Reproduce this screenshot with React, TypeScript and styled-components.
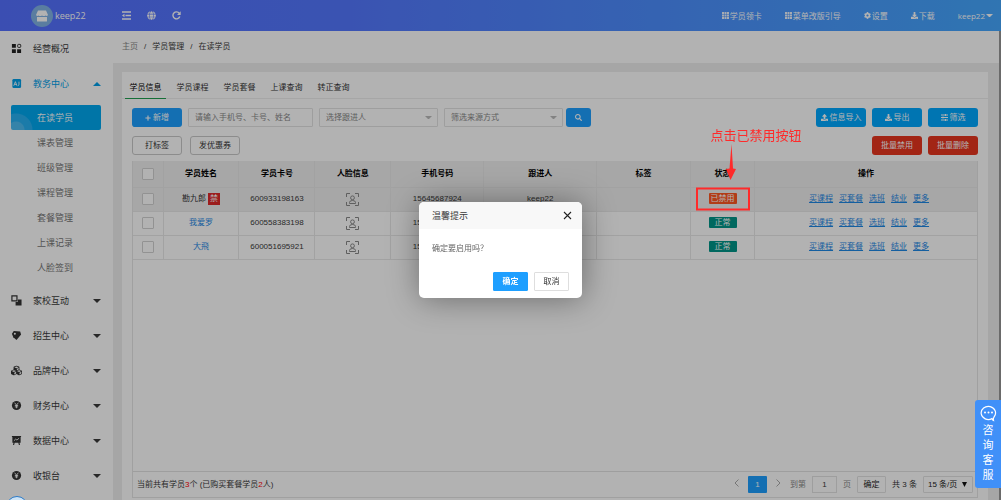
import React from "react";
import styled, { createGlobalStyle, css } from "styled-components";
import {
  FaCog,
  FaDownload,
  FaUpload,
  FaGlobe,
  FaSearch,
  FaPlus,
  FaCubes,
} from "react-icons/fa";

const Global = createGlobalStyle`
  * { box-sizing: border-box; }
  html, body { margin: 0; height: 100%; }
  #root { height: 100%; }
  body {
    font-family: "Liberation Sans", "Noto Sans CJK SC", sans-serif;
    font-size: 8px;
    line-height: 12px;
    color: #3a3a3a;
    background: #eee;
    overflow: hidden;
  }
  button, input, select { font: inherit; color: inherit; margin: 0; padding: 0; }
  button { cursor: pointer; }
  a { color: inherit; text-decoration: none; }
`;

const Page = styled.div`
  height: 100vh;
  display: flex;
  flex-direction: column;
`;

const Header = styled.header`
  flex: none;
  height: 31px;
  display: flex;
  align-items: center;
  justify-content: space-between;
  padding: 0 8px 0 31px;
  color: #fff;
  font-family: "Open Sans", "Noto Sans CJK SC", sans-serif;
  background: linear-gradient(90deg, #5570ff 0%, #5478ff 35%, #45a8ff 100%);
`;

const HeaderGroup = styled.div<{ $gap: number }>`
  display: flex;
  align-items: center;
  gap: ${(p) => p.$gap}px;
`;

const Brand = styled.a`
  display: flex;
  align-items: center;
  gap: 2px;
  width: 91px;
  font-size: 9px;
`;

const Avatar = styled.span`
  width: 22px;
  height: 22px;
  border-radius: 50%;
  background: #82b4e6;
  display: grid;
  place-items: center;
`;

const HeaderButton = styled.button`
  border: 0;
  background: none;
  display: flex;
  align-items: center;
  gap: 1px;
  white-space: nowrap;
`;

const Main = styled.div`
  flex: 1;
  min-height: 0;
  display: flex;
`;

const Sidebar = styled.nav`
  flex: none;
  width: 113px;
  background: #fff;
  overflow: hidden;
  font-size: 9px;
`;

const MenuItem = styled.a<{ $active?: boolean }>`
  height: 35px;
  padding: 0 12px 0 11px;
  display: flex;
  align-items: center;
  color: ${(p) => (p.$active ? "#00a0e9" : "#3a3a3a")};
  & > svg:first-child { width: 11px; height: 11px; margin-right: 11px; }
`;

const MenuText = styled.span`
  flex: 1;
`;

const SubMenu = styled.div`
  padding: 4px 12px 3px 11px;
`;

const SubItem = styled.a<{ $active?: boolean }>`
  position: relative;
  display: flex;
  align-items: center;
  height: 25px;
  padding-left: 26px;
  border-radius: 2px;
  overflow: hidden;
  color: #777;
  ${(p) =>
    p.$active &&
    css`
      color: #fff;
      background:
        radial-gradient(circle at 5px 25px, #4cbcf2 0 8px, #28b0f2 9px 16px, transparent 17px),
        #00a8f0;
    `}
`;

const Content = styled.main`
  flex: 1;
  min-width: 0;
  display: flex;
  flex-direction: column;
  background: #eee;
  border-right: 2px solid #999;
`;

const Breadcrumb = styled.div`
  flex: none;
  height: 32px;
  padding: 0 9px;
  display: flex;
  align-items: center;
  gap: 6px;
  background: #fff;
  a:first-child { color: #888; }
`;

const Card = styled.section`
  flex: 1;
  margin: 9px 11px 0 9px;
  background: #fff;
  display: flex;
  flex-direction: column;
`;

const Tabs = styled.div`
  height: 27px;
  padding-left: 3px;
  display: flex;
  border-bottom: 1px solid #eee;
`;

const Tab = styled.button<{ $active?: boolean }>`
  height: 27px;
  padding: 4px 4px 0;
  width: 41px;
  margin-right: 6px;
  border: 0;
  background: none;
  white-space: nowrap;
  color: ${(p) => (p.$active ? "#000" : "#333")};
  box-shadow: ${(p) => (p.$active ? "inset 0 -1px #20a050" : "none")};
`;

const Body = styled.div`
  flex: 1;
  min-height: 0;
  padding: 9px 10px 2px;
  display: flex;
  flex-direction: column;
`;

const Tools = styled.div`
  display: flex;
  justify-content: space-between;
  margin-bottom: 9px;
  &:nth-child(2) { margin-bottom: 6px; }
`;

const ToolGroup = styled.div<{ $gap: number }>`
  display: flex;
  gap: ${(p) => p.$gap}px;
`;

const tones = {
  blue: "#1e9fff",
  sky: "#00a8ff",
  red: "#e8361f",
  plain: "#fff",
};

const Button = styled.button<{ $tone: keyof typeof tones; $width?: number }>`
  width: ${(p) => p.$width ?? 50}px;
  height: 19px;
  display: flex;
  align-items: center;
  justify-content: center;
  gap: 2px;
  white-space: nowrap;
  border-radius: 3px;
  border: ${(p) => (p.$tone === "plain" ? "1px solid #c9c9c9" : "0")};
  color: ${(p) => (p.$tone === "plain" ? "#333" : "#fff")};
  background: ${(p) => tones[p.$tone]};
`;

const Field = styled.input`
  width: 125px;
  height: 19px;
  padding: 0 6px;
  border: 1px solid #e2e2e2;
  border-radius: 1px;
  background: #fff;
  &::placeholder { color: #888; opacity: 1; }
`;

const SelectBox = styled.span`
  position: relative;
  display: inline-flex;
  align-items: center;
  & > svg { position: absolute; right: 6px; pointer-events: none; }
`;

const Select = styled.select<{ $width: number }>`
  appearance: none;
  width: ${(p) => p.$width}px;
  height: 19px;
  padding: 0 6px;
  border: 1px solid #e2e2e2;
  border-radius: 1px;
  background: #fff;
  color: #888;
`;

const TableFrame = styled.div`
  flex: 1;
  display: flex;
  flex-direction: column;
  border: 1px solid #e6e6e6;
  border-top: 0;
`;

const Table = styled.table`
  width: 100%;
  border-collapse: collapse;
  table-layout: fixed;
  text-align: center;
  th, td {
    padding: 0;
    height: 24px;
    border-right: 1px solid #e8e8e8;
    border-bottom: 1px solid #e8e8e8;
    white-space: nowrap;
  }
  th { height: 26px; background: #f0f0f0; color: #000; }
  th:last-child, td:last-child { border-right: 0; }
`;

const Row = styled.tr<{ $hover?: boolean }>`
  background: ${(p) => (p.$hover ? "#f0f0f0" : "#fff")};
`;

const Check = styled.input`
  appearance: none;
  display: block;
  width: 12px;
  height: 12px;
  margin: 0 auto;
  border: 1px solid #d2d2d2;
  border-radius: 1px;
  background: #fff;
`;

const NameLink = styled.a<{ $plain?: boolean }>`
  color: ${(p) => (p.$plain ? "#333" : "#1e88e5")};
`;

const Ban = styled.span`
  display: inline-block;
  width: 12px;
  margin-left: 2px;
  background: #e02a2a;
  color: #fff;
`;

const Status = styled.span<{ $off?: boolean }>`
  display: inline-block;
  width: 28px;
  height: 11px;
  line-height: 11px;
  border-radius: 1px;
  color: #fff;
  background: ${(p) => (p.$off ? "#ff5722" : "#009688")};
  vertical-align: middle;
`;

const StatusAnchor = styled.span`
  position: relative;
  display: inline-block;
`;

const Highlight = styled.span`
  position: absolute;
  z-index: 20;
  left: 50%;
  top: 50%;
  width: 54px;
  height: 23px;
  transform: translate(-50%, -50%);
  border: 2px solid #ff2a2a;
`;

const Hint = styled.span`
  position: absolute;
  z-index: 20;
  left: 2px;
  bottom: 25px;
  width: 92px;
  display: flex;
  flex-direction: column;
  color: #ff2a2a;
  font-size: 13px;
  line-height: 16px;
  text-align: left;
  svg { display: block; margin-left: 15px; }
`;

const Ops = styled.div`
  display: flex;
  justify-content: center;
  gap: 6px;
  padding-left: 6px;
  color: #1e88e5;
  a { text-decoration: underline; }
`;

const TableFoot = styled.div`
  margin-top: auto;
  height: 26px;
  padding: 0 4px;
  display: flex;
  align-items: center;
  justify-content: space-between;
  border-top: 1px solid #e2e2e2;
  b { color: #f00; font-weight: 400; }
`;

const Pager = styled.div`
  display: flex;
  align-items: center;
  gap: 6px;
  white-space: nowrap;
  span { color: #888; }
  span:nth-last-of-type(2) { color: #333; }
`;

const PageButton = styled.button<{ $kind: "arrow" | "current" | "go" }>`
  height: 17px;
  border-radius: 1px;
  border: ${(p) => (p.$kind === "go" ? "1px solid #e2e2e2" : "0")};
  width: ${(p) => ({ arrow: 11, current: 19, go: 29 })[p.$kind]}px;
  color: ${(p) => (p.$kind === "current" ? "#fff" : "#222")};
  background: ${(p) => (p.$kind === "current" ? "#1e9fff" : "#fff")};
`;

const PageField = styled.input`
  width: 25px;
  height: 17px;
  border: 1px solid #e2e2e2;
  background: #fff;
  text-align: center;
`;

const PageSelect = styled(Select)`
  height: 17px;
  padding: 0 4px;
  color: #222;
`;

const Overlay = styled.div`
  position: fixed;
  inset: 0;
  z-index: 10;
  background: rgba(0, 0, 0, 0.3);
`;

const DialogLayer = styled.div`
  position: fixed;
  inset: 0;
  z-index: 30;
  display: flex;
  align-items: center;
  justify-content: center;
  pointer-events: none;
`;

const Dialog = styled.div`
  width: 163px;
  border-radius: 5px;
  overflow: hidden;
  background: #fff;
  box-shadow: 1px 1px 32px rgba(0, 0, 0, 0.4);
  pointer-events: auto;
`;

const DialogHead = styled.div`
  height: 27px;
  padding: 0 10px 0 13px;
  display: flex;
  align-items: center;
  justify-content: space-between;
  background: #f8f8f8;
  font-size: 9px;
`;

const Close = styled.button`
  border: 0;
  background: none;
  display: flex;
`;

const DialogText = styled.p`
  margin: 0;
  padding: 14px 13px 17px;
  color: #666;
`;

const DialogActions = styled.div`
  display: flex;
  justify-content: flex-end;
  gap: 6px;
  padding: 0 13px 7px;
`;

const DialogButton = styled.button<{ $primary?: boolean }>`
  width: 35px;
  height: 19px;
  border-radius: 1px;
  border: 1px solid ${(p) => (p.$primary ? "#1e9fff" : "#dedede")};
  background: ${(p) => (p.$primary ? "#1e9fff" : "#fff")};
  color: ${(p) => (p.$primary ? "#fff" : "#333")};
  font-weight: ${(p) => (p.$primary ? 700 : 400)};
`;

const Chat = styled.button`
  position: fixed;
  right: 0;
  bottom: 12px;
  z-index: 20;
  width: 26px;
  height: 88px;
  padding: 5px 0 0;
  border: 0;
  border-radius: 3px 0 0 3px;
  background: #4090f8;
  color: #fff;
  display: flex;
  flex-direction: column;
  align-items: center;
  font-size: 11px;
  line-height: 15px;
  svg { margin-bottom: 1px; }
`;

const Bubble = styled.span`
  position: fixed;
  z-index: 20;
  left: 6px;
  bottom: -18px;
  width: 22px;
  height: 22px;
  border: 1px solid #2a7ac8;
  border-radius: 50%;
  background: #cfe4f5;
`;

const Caret = ({ up, color = "currentColor", w = 8 }: { up?: boolean; color?: string; w?: number }) => (
  <svg width={w} height={w / 2} viewBox="0 0 8 4" fill={color}>
    <path d={up ? "M0 4L4 0L8 4Z" : "M0 0H8L4 4Z"} />
  </svg>
);

const Yen = () => (
  <svg viewBox="0 0 12 12">
    <circle cx="6" cy="6" r="5" fill="#333" />
    <path d="M4 3L6 5.600L8 3M6 5.500V9M4.200 6H7.800M4.200 7.500H7.800" stroke="#fff" fill="none" strokeWidth=".9" />
  </svg>
);

const icons: Record<string, React.ReactNode> = {
  grid: (
    <svg viewBox="0 0 12 12" fill="#222">
      <path d="M1 1H5.300V5.300H1ZM1 6.700H5.300V11H1ZM6.700 6.700H11V11H6.700Z" />
      <rect x="7.300" y="1.500" width="3.300" height="3.300" rx=".8" fill="none" stroke="#222" />
    </svg>
  ),
  edu: (
    <svg viewBox="0 0 12 12">
      <rect x="1.500" y="1" width="9.500" height="10" rx="1.500" fill="#00a0e9" />
      <path d="M3 8.500L4.800 4L6.500 8.500M3.600 7H6M8.700 4V7.500L7.500 8.500" stroke="#fff" fill="none" strokeWidth=".9" />
    </svg>
  ),
  home: (
    <svg viewBox="0 0 12 12">
      <path d="M1 1H6.500V6.500H1Z" fill="none" stroke="#333" strokeWidth="1.300" />
      <path d="M7.500 5H11.500V11.500H5V7.500H7.500Z" fill="#333" />
    </svg>
  ),
  tag: (
    <svg viewBox="0 0 12 12">
      <path d="M1 4L3 1L10 1.500L11 5L6 11L2.500 8Z" fill="#333" />
      <circle cx="4.200" cy="4" r="1.100" fill="#fff" />
    </svg>
  ),
  brand: <FaCubes color="#333" />,
  yen: <Yen />,
  data: (
    <svg viewBox="0 0 12 12">
      <path d="M1 1H11V2.200H10.500V8.500H9.300L9.800 11H8.600L8 8.500H4L3.400 11H2.200L2.700 8.500H1.500V2.200H1Z" fill="#333" />
      <path d="M3.200 6.300L5 4.500L6.500 5.500L8.800 3.500" stroke="#fff" fill="none" strokeWidth=".9" />
    </svg>
  ),
};

const FaceIcon = styled.svg`
  vertical-align: middle;
`;

const Face = () => (
  <FaceIcon width="13" height="13" viewBox="0 0 13 13" fill="none" stroke="#888">
    <path d="M.5 4V.5H4M9 .5H12.500V4M12.500 9V12.500H9M4 12.500H.5V9" />
    <circle cx="6.500" cy="4.800" r="1.900" />
    <path d="M3.500 10.500V9.500Q3.500 7.500 6.500 7.500Q9.500 7.500 9.500 9.500V10.500Z" />
  </FaceIcon>
);

const SmallGrid = () => (
  <svg width="7" height="7" viewBox="0 0 7 7" fill="#fff" opacity=".9">
    <path d="M0 0H2V2H0ZM2.500 0H4.500V2H2.500ZM5 0H7V2H5ZM0 2.500H2V4.500H0ZM2.500 2.500H4.500V4.500H2.500ZM5 2.500H7V4.500H5ZM0 5H2V7H0ZM2.500 5H4.500V7H2.500ZM5 5H7V7H5Z" />
  </svg>
);

const subItems = ["在读学员", "课表管理", "班级管理", "课程管理", "套餐管理", "上课记录", "人脸签到"];
const menus = [
  ["home", "家校互动"],
  ["tag", "招生中心"],
  ["brand", "品牌中心"],
  ["yen", "财务中心"],
  ["data", "数据中心"],
  ["yen", "收银台"],
];
const tabs = ["学员信息", "学员课程", "学员套餐", "上课查询", "转正查询"];
const columns: [string, string][] = [
  ["学员姓名", "9%"],
  ["学员卡号", "9%"],
  ["人脸信息", "9%"],
  ["手机号码", "11%"],
  ["跟进人", "13.400%"],
  ["标签", "11.100%"],
  ["状态", "7.600%"],
  ["操作", "auto"],
];
const students = [
  { name: "勘九郎", card: "600933198163", phone: "15645687924", owner: "keep22", off: true },
  { name: "我爱罗", card: "600558383198", phone: "15645687925", owner: "keep22", off: false },
  { name: "大飛", card: "600051695921", phone: "15645687926", owner: "keep22", off: false },
];
const actions = ["买课程", "买套餐", "选班", "结业", "更多"];

export default function App() {
  return (
    <>
      <Global />
      <Page>
        <Header>
          <HeaderGroup $gap={0}>
            <Brand href="#">
              <Avatar>
                <svg width="12" height="12" viewBox="0 0 12 12" fill="#fff">
                  <path d="M2 .5H10L12 5Q11 6.500 9.500 5.500Q8 6.500 6 5.500Q4 6.500 2.500 5.500Q1 6.500 0 5Z" />
                  <path d="M1 7H11V11Q11 11.500 10.500 11.500H1.500Q1 11.500 1 11Z" />
                </svg>
              </Avatar>
              keep22
            </Brand>
            <HeaderGroup $gap={16}>
              <HeaderButton aria-label="折叠菜单">
                <svg width="9" height="9" viewBox="0 0 9 9" fill="none" stroke="#fff" strokeWidth="1.300">
                  <path d="M0 1H9M3.500 4.500H9M0 8H9" />
                  <path d="M2.500 2.800V6.200L0 4.500Z" fill="#fff" stroke="none" />
                </svg>
              </HeaderButton>
              <HeaderButton aria-label="网站">
                <FaGlobe size={9} />
              </HeaderButton>
              <HeaderButton aria-label="刷新">
                <svg width="9" height="9" viewBox="0 0 9 9" fill="none" stroke="#fff" strokeWidth="1.400">
                  <path d="M7.800 5.500A3.500 3.500 0 1 1 7.300 2.300" />
                  <path d="M8.700 .3V4H5Z" fill="#fff" stroke="none" />
                </svg>
              </HeaderButton>
            </HeaderGroup>
          </HeaderGroup>
          <HeaderGroup $gap={23}>
            <HeaderButton><SmallGrid />学员领卡</HeaderButton>
            <HeaderButton><SmallGrid />菜单改版引导</HeaderButton>
            <HeaderButton><FaCog size={7} />设置</HeaderButton>
            <HeaderButton><FaDownload size={7} />下载</HeaderButton>
            <HeaderButton>keep22<Caret w={7} /></HeaderButton>
          </HeaderGroup>
        </Header>
        <Main>
          <Sidebar>
            <MenuItem href="#">{icons.grid}<MenuText>经营概况</MenuText></MenuItem>
            <MenuItem href="#" $active>{icons.edu}<MenuText>教务中心</MenuText><Caret up /></MenuItem>
            <SubMenu>
              {subItems.map((s, i) => (
                <SubItem href="#" key={s} $active={i === 0}>{s}</SubItem>
              ))}
            </SubMenu>
            {menus.map(([icon, label]) => (
              <MenuItem href="#" key={label}>{icons[icon]}<MenuText>{label}</MenuText><Caret /></MenuItem>
            ))}
          </Sidebar>
          <Content>
            <Breadcrumb>
              <a href="#">主页</a><span>/</span><a href="#">学员管理</a><span>/</span><span>在读学员</span>
            </Breadcrumb>
            <Card>
              <Tabs>
                {tabs.map((t, i) => <Tab key={t} $active={i === 0}>{t}</Tab>)}
              </Tabs>
              <Body>
                <Tools>
                  <ToolGroup $gap={6}>
                    <Button $tone="blue"><FaPlus size={6} />新增</Button>
                    <Field aria-label="学员" placeholder="请输入手机号、卡号、姓名" />
                    <SelectBox>
                      <Select aria-label="跟进人" $width={119}><option>选择跟进人</option></Select>
                      <Caret color="#bbb" w={7} />
                    </SelectBox>
                    <ToolGroup $gap={3}>
                      <SelectBox>
                        <Select aria-label="来源方式" $width={119}><option>筛选来源方式</option></Select>
                        <Caret color="#bbb" w={7} />
                      </SelectBox>
                      <Button $tone="blue" $width={25} aria-label="搜索"><FaSearch size={7} /></Button>
                    </ToolGroup>
                  </ToolGroup>
                  <ToolGroup $gap={6}>
                    <Button $tone="sky"><FaUpload size={7} />信息导入</Button>
                    <Button $tone="sky"><FaDownload size={7} />导出</Button>
                    <Button $tone="sky">
                      <svg width="7" height="7" viewBox="0 0 7 7" stroke="#fff" fill="none">
                        <path d="M0 1H7M0 3.500H7M0 6H7M4.500 0V2M2 2.500V4.500M4.500 5V7" />
                      </svg>
                      筛选
                    </Button>
                  </ToolGroup>
                </Tools>
                <Tools>
                  <ToolGroup $gap={8}>
                    <Button $tone="plain">打标签</Button>
                    <Button $tone="plain">发优惠券</Button>
                  </ToolGroup>
                  <ToolGroup $gap={6}>
                    <Button $tone="red">批量禁用</Button>
                    <Button $tone="red">批量删除</Button>
                  </ToolGroup>
                </Tools>
                <TableFrame>
                  <Table>
                    <colgroup>
                      <col style={{ width: 30 }} />
                      {columns.map(([c, w]) => <col key={c} style={{ width: w }} />)}
                    </colgroup>
                    <thead>
                      <tr>
                        <th><Check type="checkbox" aria-label="全选" /></th>
                        {columns.map(([c]) => <th key={c}>{c}</th>)}
                      </tr>
                    </thead>
                    <tbody>
                      {students.map((s) => (
                        <Row key={s.card} $hover={s.off}>
                          <td><Check type="checkbox" aria-label={s.name} /></td>
                          <td>
                            <NameLink href="#" $plain={s.off}>{s.name}</NameLink>
                            {s.off && <Ban>禁</Ban>}
                          </td>
                          <td>{s.card}</td>
                          <td><Face /></td>
                          <td>{s.phone}</td>
                          <td>{s.owner}</td>
                          <td />
                          <td>
                            <StatusAnchor>
                              <Status $off={s.off}>{s.off ? "已禁用" : "正常"}</Status>
                              {s.off && (
                                <>
                                  <Highlight />
                                  <Hint>
                                    点击已禁用按钮
                                    <svg width="10" height="36" viewBox="0 0 10 36" fill="#ff2a2a">
                                      <path d="M5.500 0L7 24.500L10 25L4.500 36L0 25L3.500 24.500Z" />
                                    </svg>
                                  </Hint>
                                </>
                              )}
                            </StatusAnchor>
                          </td>
                          <td>
                            <Ops>{actions.map((a) => <a href="#" key={a}>{a}</a>)}</Ops>
                          </td>
                        </Row>
                      ))}
                    </tbody>
                  </Table>
                  <TableFoot>
                    <div>当前共有学员<b>3</b>个 (已购买套餐学员<b>2</b>人)</div>
                    <Pager>
                      <PageButton $kind="arrow" aria-label="上一页">
                        <svg width="5" height="8" viewBox="0 0 5 8" fill="none" stroke="#aaa"><path d="M4.500 .5L1 4L4.500 7.500" /></svg>
                      </PageButton>
                      <PageButton $kind="current">1</PageButton>
                      <PageButton $kind="arrow" aria-label="下一页">
                        <svg width="5" height="8" viewBox="0 0 5 8" fill="none" stroke="#aaa"><path d="M.5 .5L4 4L.5 7.500" /></svg>
                      </PageButton>
                      <span>到第</span>
                      <PageField aria-label="页码" defaultValue="1" />
                      <span>页</span>
                      <PageButton $kind="go">确定</PageButton>
                      <span>共 3 条</span>
                      <SelectBox>
                        <PageSelect aria-label="每页条数" $width={50}><option>15 条/页</option></PageSelect>
                        <svg width="5" height="5" viewBox="0 0 5 5"><path d="M0 0H5L2.500 5Z" fill="#111" /></svg>
                      </SelectBox>
                    </Pager>
                  </TableFoot>
                </TableFrame>
              </Body>
            </Card>
          </Content>
        </Main>
      </Page>
      <Overlay />
      <Bubble />
      <Chat>
        <svg width="17" height="17" viewBox="0 0 17 17" fill="none" stroke="#fff" strokeWidth="1.200">
          <path d="M12 13.600A7.200 6.600 0 1 1 14 12Q13 13.500 13.500 15.500Q12.300 15 12 13.600Z" />
          <g fill="#fff" stroke="none"><circle cx="5" cy="7.500" r="1" /><circle cx="8.500" cy="7.500" r="1" /><circle cx="12" cy="7.500" r="1" /></g>
        </svg>
        <span>咨</span><span>询</span><span>客</span><span>服</span>
      </Chat>
      <DialogLayer>
        <Dialog role="dialog" aria-label="温馨提示">
          <DialogHead>
            温馨提示
            <Close aria-label="关闭">
              <svg width="9" height="9" viewBox="0 0 9 9" stroke="#222" strokeWidth="1.100"><path d="M1 1L8 8M8 1L1 8" /></svg>
            </Close>
          </DialogHead>
          <DialogText>确定要启用吗？</DialogText>
          <DialogActions>
            <DialogButton $primary>确定</DialogButton>
            <DialogButton>取消</DialogButton>
          </DialogActions>
        </Dialog>
      </DialogLayer>
    </>
  );
}
